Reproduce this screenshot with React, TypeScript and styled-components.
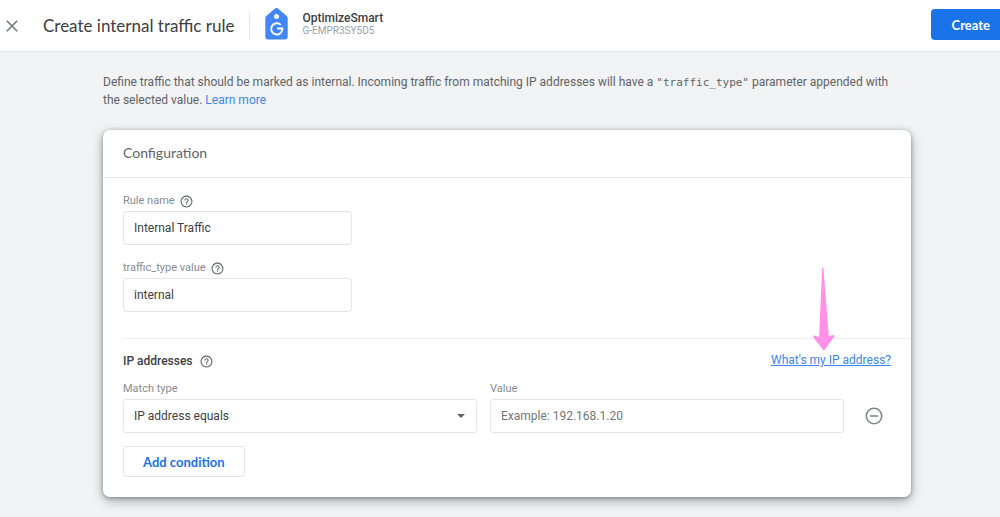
import React from "react";
import styled, { createGlobalStyle } from "styled-components";

const GlobalStyle = createGlobalStyle`
  *, *::before, *::after { box-sizing: border-box; }
  body {
    margin: 0;
    background: #f1f3f4;
    color: #3c4043;
    font: 12px/18px Roboto, "Liberation Sans", sans-serif;
  }
  input, select, button { font-family: inherit; }
`;

const TopBar = styled.header`
  display: flex;
  align-items: center;
  height: 52px;
  padding-left: 3px;
  background: #fff;
  border-bottom: 1px solid #e3e5e8;
`;

const IconButton = styled.button<{ $size: number }>`
  display: flex;
  align-items: center;
  justify-content: center;
  width: ${(p) => p.$size}px;
  height: ${(p) => p.$size}px;
  padding: 0;
  border: 0;
  background: none;
  color: #80868b;
  cursor: pointer;
`;

const Title = styled.h1`
  margin: 0 0 0 22px;
  padding-right: 15px;
  color: #3c4043;
  font: 400 17px/28px Lato, Roboto, sans-serif;
  border-right: 1px solid #e3e5e8;
`;

const Property = styled.div`
  display: flex;
  align-items: center;
  gap: 14px;
  margin-left: 15px;
  padding-bottom: 3px;
`;

const PropertyName = styled.div`
  color: #3c4043;
  font-weight: 500;
  font-size: 12px;
  line-height: 14px;
`;

const PropertyId = styled.div`
  color: #9aa0a6;
  font-size: 10px;
  line-height: 12px;
`;

const CreateButton = styled.button`
  height: 31px;
  margin: 0 0 2px auto;
  padding: 0 10px 0 21px;
  border: 0;
  border-radius: 4px 0 0 4px;
  background: #1a73e8;
  color: #fff;
  font: 700 13px/18px Lato, Roboto, sans-serif;
  cursor: pointer;
`;

const Page = styled.main`
  padding: 21px 89px 20px 103px;
`;

const Intro = styled.p`
  margin: 0 0 21px;
  padding-right: 8px;
  color: #5f6368;
  font-size: 12px;
  line-height: 18px;
  code { font: 11px/16px "DejaVu Sans Mono", monospace; }
`;

const TextLink = styled.a<{ $underlined?: boolean }>`
  color: #3c86ec;
  text-decoration: ${(p) => (p.$underlined ? "underline" : "none")};
`;

const Card = styled.section`
  background: #fff;
  border-radius: 7px;
  box-shadow: 0 4px 12px rgba(0, 0, 0, 0.3), 0 1px 4px rgba(0, 0, 0, 0.3);
`;

const CardTitle = styled.h2`
  margin: 0;
  padding: 0 20px 2px;
  border-bottom: 1px solid #e6e8ea;
  color: #5f6368;
  font: 400 14px/45px Lato, Roboto, sans-serif;
`;

const Names = styled.div`
  display: grid;
  gap: 16px;
  padding: 16px 20px 26px;
`;

const Field = styled.div<{ $narrow?: boolean }>`
  width: ${(p) => (p.$narrow ? "229px" : "auto")};
`;

const LabelRow = styled.div`
  display: flex;
  align-items: center;
  gap: 5px;
  height: 17px;
  padding-bottom: 3px;
  color: #878c91;
  font-size: 11px;
  line-height: 16px;
`;

const TextBox = styled.input`
  display: block;
  width: 100%;
  height: 34px;
  padding: 0 10px;
  border: 1px solid #e3e5e7;
  border-radius: 3px;
  background: #fff;
  color: #3c4043;
  font-size: 12px;
  &::placeholder { color: #757575; opacity: 1; }
`;

const SelectWrap = styled.div`
  position: relative;
  svg {
    position: absolute;
    top: 15px;
    right: 12px;
    pointer-events: none;
  }
`;

const Select = styled.select`
  display: block;
  appearance: none;
  width: 100%;
  height: 34px;
  padding: 0 30px 0 10px;
  border: 1px solid #e3e5e7;
  border-radius: 3px;
  background: #fff;
  color: #3c4043;
  font-size: 12px;
`;

const Addresses = styled.div`
  margin-left: 20px;
  padding: 12px 20px 20px 0;
  border-top: 1px solid #eceeef;
`;

const AddressHeader = styled.div`
  display: flex;
  justify-content: space-between;
  height: 31px;
`;

const SectionTitle = styled.h3`
  display: flex;
  align-items: center;
  gap: 7px;
  height: 20px;
  margin: 0;
  color: #3c4043;
  font-size: 12px;
  font-weight: 500;
`;

const LinkWithPointer = styled.div`
  position: relative;
  svg {
    position: absolute;
    bottom: 31px;
    left: 42px;
    pointer-events: none;
  }
`;

const Condition = styled.div`
  display: grid;
  grid-template-columns: 1fr 1fr 34px;
  gap: 13px;
  align-items: end;
`;

const AddButton = styled.button`
  height: 31px;
  margin-top: 13px;
  padding: 0 19px;
  border: 1px solid #e3e5e7;
  border-radius: 3px;
  background: #fff;
  color: #1a73e8;
  font: 700 13px/18px Lato, Roboto, sans-serif;
  cursor: pointer;
`;

const HelpIcon = () => (
  <svg width="13" height="13" viewBox="0 0 24 24" fill="#5f6368" aria-hidden="true">
    <path d="M11 18h2v-2h-2v2zm1-17C5.930 1 1 5.930 1 12s4.930 11 11 11 11-4.930 11-11S18.070 1 12 1zm0 20c-4.960 0-9-4.040-9-9s4.040-9 9-9 9 4.040 9 9-4.040 9-9 9zm0-15c-2.210 0-4 1.790-4 4h2c0-1.100.9-2 2-2s2 .9 2 2c0 2-3 1.750-3 5h2c0-2.250 3-2.500 3-5 0-2.210-1.790-4-4-4z" />
  </svg>
);

const TagLogo = () => (
  <svg width="23" height="32" viewBox="0 0 23 32" aria-hidden="true">
    <path d="M9.800.7a2.600 2.600 0 0 1 3.400 0l8.500 7.400q1 .9 1 2.100V29a2.400 2.400 0 0 1-2.400 2.400H2.700A2.400 2.400 0 0 1 .3 29V10.200q0-1.200 1-2.100z" fill="#4285f4" />
    <circle cx="11.500" cy="8.500" r="2.500" fill="#fff" />
    <path d="M15.800 16.900a5.600 5.600 0 1 0 1.600 3.700h-5.400" fill="none" stroke="#fff" strokeWidth="2" />
  </svg>
);

export default function App() {
  return (
    <>
      <GlobalStyle />
      <TopBar>
        <IconButton $size={18} aria-label="Close">
          <svg width="12" height="12" viewBox="0 0 12 12" stroke="#6f7377" strokeWidth="1.500">
            <path d="M.8.8l10.400 10.400M11.200.8L.8 11.200" />
          </svg>
        </IconButton>
        <Title>Create internal traffic rule</Title>
        <Property>
          <TagLogo />
          <div>
            <PropertyName>OptimizeSmart</PropertyName>
            <PropertyId>G-EMPR3SY5D5</PropertyId>
          </div>
        </Property>
        <CreateButton>Create</CreateButton>
      </TopBar>
      <Page>
        <Intro>
          Define traffic that should be marked as internal. Incoming traffic from matching IP
          addresses will have a <code>"traffic_type"</code> parameter appended with the selected
          value. <TextLink href="#learn-more">Learn more</TextLink>
        </Intro>
        <Card>
          <CardTitle>Configuration</CardTitle>
          <Names>
            <Field $narrow>
              <LabelRow>
                <label htmlFor="rule-name">Rule name</label>
                <HelpIcon />
              </LabelRow>
              <TextBox id="rule-name" defaultValue="Internal Traffic" />
            </Field>
            <Field $narrow>
              <LabelRow>
                <label htmlFor="traffic-type">traffic_type value</label>
                <HelpIcon />
              </LabelRow>
              <TextBox id="traffic-type" defaultValue="internal" />
            </Field>
          </Names>
          <Addresses>
            <AddressHeader>
              <SectionTitle>
                IP addresses
                <HelpIcon />
              </SectionTitle>
              <LinkWithPointer>
                <TextLink $underlined href="#my-ip">What's my IP address?</TextLink>
                <svg width="22" height="84" viewBox="0 0 22 84" aria-hidden="true">
                  <path d="M9.200 1q.6-1 1.200 0L15.800 69l4.400-1q1.600.3.800 1.800L12 82.500q-1.200 1-2.200 0L.5 70.500q-.6-2 1-2L6.100 70z" fill="#ff90e8" />
                </svg>
              </LinkWithPointer>
            </AddressHeader>
            <Condition>
              <Field>
                <LabelRow>
                  <label htmlFor="match-type">Match type</label>
                </LabelRow>
                <SelectWrap>
                  <Select id="match-type" defaultValue="equals">
                    <option value="equals">IP address equals</option>
                  </Select>
                  <svg width="8" height="4" viewBox="0 0 8 4" aria-hidden="true">
                    <path d="M0 0h8L4 4z" fill="#5f6368" />
                  </svg>
                </SelectWrap>
              </Field>
              <Field>
                <LabelRow>
                  <label htmlFor="ip-value">Value</label>
                </LabelRow>
                <TextBox id="ip-value" placeholder="Example: 192.168.1.20" />
              </Field>
              <IconButton $size={34} aria-label="Remove condition">
                <svg width="18" height="18" viewBox="0 0 18 18" fill="none" stroke="#85888b" strokeWidth="1.600">
                  <circle cx="9" cy="9" r="7.700" />
                  <path d="M5 9h8" />
                </svg>
              </IconButton>
            </Condition>
            <AddButton>Add condition</AddButton>
          </Addresses>
        </Card>
      </Page>
    </>
  );
}
